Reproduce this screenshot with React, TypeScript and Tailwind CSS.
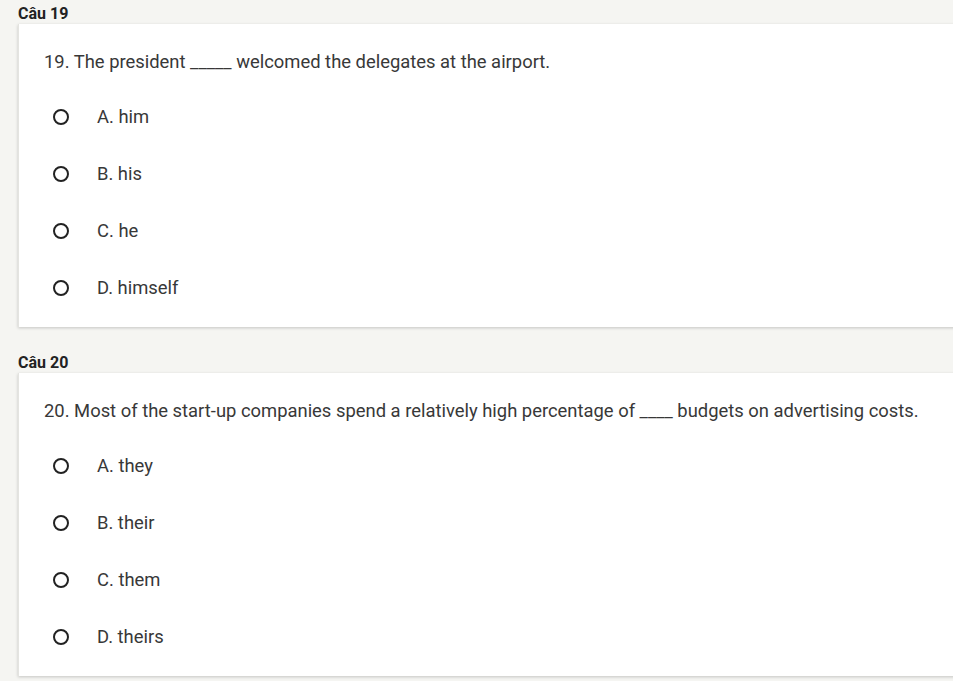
import React from "react";

const questions = [
  {
    header: "Câu 19",
    text: "19. The president _____ welcomed the delegates at the airport.",
    options: ["A. him", "B. his", "C. he", "D. himself"],
  },
  {
    header: "Câu 20",
    text: "20. Most of the start-up companies spend a relatively high percentage of ____ budgets on advertising costs.",
    options: ["A. they", "B. their", "C. them", "D. theirs"],
  },
];

function Radio() {
  return (
    <span className="w-[16px] h-[16px] rounded-full border-2 border-[#222] box-border shrink-0" />
  );
}

export default function App() {
  return (
    <div
      className="min-h-screen bg-[#f5f5f2] pl-[18px] pt-[4px]"
      style={{ fontFamily: "Roboto, 'Liberation Sans', sans-serif" }}
    >
      {questions.map((q, qi) => (
        <div key={qi} className={qi === 0 ? "" : "mt-[26px]"}>
          <div className="text-[16px] font-bold text-[#222] h-[20px] leading-[20px]">{q.header}</div>
          <div className="bg-white border-l border-[#e4e4e0] shadow-[0_1px_3px_rgba(0,0,0,0.2)] pl-[25px] pt-[26px] pb-[27px] mr-[-10px]">
            <div className="text-[18.4px] text-[#383838] leading-[24px]">{q.text}</div>
            <div className="mt-[31px] flex flex-col gap-[33px]">
              {q.options.map((o, oi) => (
                <div key={oi} className="flex items-center h-[24px] pl-[9px]">
                  <Radio />
                  <span className="ml-[28px] text-[18.4px] text-[#383838]">{o}</span>
                </div>
              ))}
            </div>
          </div>
        </div>
      ))}
    </div>
  );
}
